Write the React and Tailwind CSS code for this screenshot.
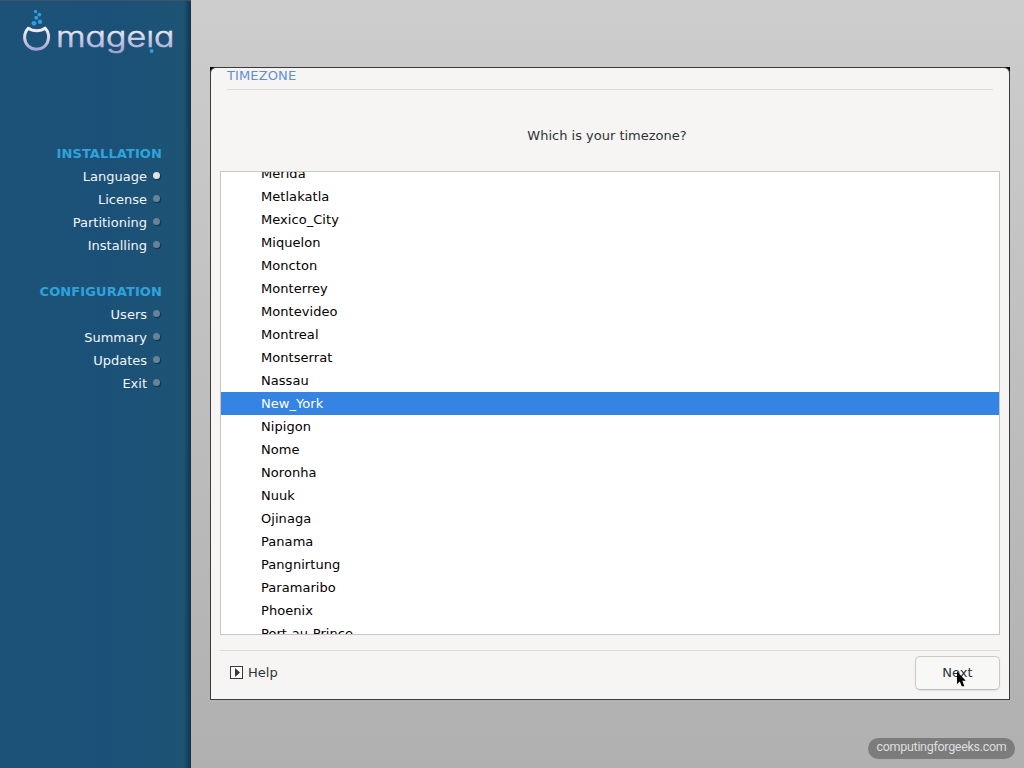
import React, { useState } from 'react';

const steps = [
  { title: 'INSTALLATION', items: ['Language', 'License', 'Partitioning', 'Installing'] },
  { title: 'CONFIGURATION', items: ['Users', 'Summary', 'Updates', 'Exit'] },
];

const zones = [
  'Merida', 'Metlakatla', 'Mexico_City', 'Miquelon', 'Moncton', 'Monterrey', 'Montevideo',
  'Montreal', 'Montserrat', 'Nassau', 'New_York', 'Nipigon', 'Nome', 'Noronha', 'Nuuk',
  'Ojinaga', 'Panama', 'Pangnirtung', 'Paramaribo', 'Phoenix', 'Port-au-Prince',
];

const Logo = () => (
  <svg width="191" height="64" viewBox="0 0 191 64" className="block" role="img" aria-label="mageia">
    <defs>
      <linearGradient id="silver" gradientUnits="userSpaceOnUse" x1="0" y1="27" x2="0" y2="54">
        <stop offset="0" stopColor="#f6f3f8" />
        <stop offset="0.45" stopColor="#d3cfe4" />
        <stop offset="1" stopColor="#8d92cb" />
      </linearGradient>
      <linearGradient id="word" gradientUnits="userSpaceOnUse" x1="0" y1="-18" x2="0" y2="8">
        <stop offset="0" stopColor="#f0edf4" />
        <stop offset="1" stopColor="#9a9dd0" />
      </linearGradient>
    </defs>
    <g fill="#2e9fdc">
      <circle cx="35.5" cy="11.5" r="1.7" />
      <circle cx="39.4" cy="14.6" r="1.9" />
      <circle cx="36.3" cy="17.8" r="2" />
      <circle cx="34" cy="23.3" r="2.4" />
      <circle cx="40" cy="21.8" r="2.2" />
      <circle cx="151.6" cy="51" r="2" />
    </g>
    <path
      d="M28.3 28.2C32.5 31.6 41 31.6 45.1 28.2C48 31.3 48.8 34.2 48.6 37.5C48.1 44.7 43.4 49.2 36.7 49.2C30 49.2 25.1 44.7 24.6 37.8C24.4 34.3 25.5 31.2 28.3 28.2Z"
      fill="none" stroke="url(#silver)" strokeWidth="3" strokeLinejoin="round"
    />
    <text
      x="0" y="0" transform="translate(56 46.6)" className="font-['Inter',sans-serif] font-light [font-feature-settings:'cv11']"
      fontSize="28.5" textLength="118.5" lengthAdjust="spacingAndGlyphs" fill="url(#word)" stroke="url(#word)" strokeWidth="0.6"
    >mageıa</text>
  </svg>
);

const Bullet = ({ active }) => (
  <span className={`w-[7px] h-[7px] rounded-full ml-[6px] mr-[2px] shadow-[1px_1px_1px_rgba(0,0,0,0.4)] ${active ? 'bg-[#e2e2e2]' : 'bg-[#688297]'}`} />
);

const Sidebar = () => (
  <aside className="w-[191px] h-full shrink-0 border-t border-[#3d5365] bg-[linear-gradient(90deg,transparent_184px,#123449_191px),linear-gradient(90deg,#1d5278,#1b5178_55%,#1d5374)]">
    <div className="h-[141px] -mt-px"><Logo /></div>
    <nav className="flex flex-col gap-[23px] pr-[29px] text-[13px]">
      {steps.map((group, g) => (
        <div key={group.title} className="flex flex-col items-end">
          <h2 className="h-[23px] leading-[25px] font-bold text-[#2fa3dc] tracking-[0.1px]">{group.title}</h2>
          {group.items.map((item, i) => (
            <div key={item} className="h-[23px] flex items-center text-[#f2f5f7]">
              <span className="leading-[23px] pt-px">{item}</span>
              <Bullet active={g === 0 && i === 0} />
            </div>
          ))}
        </div>
      ))}
    </nav>
  </aside>
);

const App = () => {
  const [zone, setZone] = useState('New_York');

  return (
    <div className="w-[1024px] h-[768px] flex overflow-hidden font-['DejaVu_Sans',sans-serif] text-[13px]">
      <Sidebar />
      <main className="flex-1 flex flex-col bg-linear-to-b from-[#cdcdcd] to-[#b0b0b0] pt-[67px] pl-[19px] pr-[14px]">
        <div className="h-[633px] bg-black">
          <section className="h-full flex flex-col border border-[#3b3b3b] rounded-t-[6px] bg-[#f6f5f3] px-[9px]">
            <h1 className="h-[22px] mx-[7px] leading-[16px] border-b border-[#dcdbd9] text-[#5f8ed8] tracking-[0.12px]">TIMEZONE</h1>
            <p className="h-[81px] pt-[36px] pr-[6px] leading-[20px] text-center text-[#2e3436]">Which is your timezone?</p>
            <ul className="h-[464px] overflow-hidden border border-[#c9c5c0] bg-white">
              {zones.map((name) => (
                <li
                  key={name}
                  onClick={() => setZone(name)}
                  className={`h-[23px] pl-10 leading-[24px] tracking-[0.05px] first:-mt-[10px] ${name === zone ? 'bg-[#3584e4] text-white' : 'text-black'}`}
                >
                  {name}
                </li>
              ))}
            </ul>
            <footer className="mt-[15px] border-t border-[#dcdbd9] pt-[5px] pl-[10px] flex items-center justify-between text-[#2e3436]">
              <button className="flex items-center gap-[5px]">
                <svg width="13" height="13" viewBox="0 0 13 13" className="-mt-px">
                  <rect x="0.5" y="0.5" width="12" height="12" fill="#fcfcfb" stroke="#35393b" />
                  <path d="M5 2L10 6.5L5 11Z" fill="#35393b" />
                </svg>
                Help
              </button>
              <button className="relative w-[85px] h-[34px] border border-[#cdc8c3] border-b-[#bfbab5] rounded-[5px] bg-[#f8f8f6] shadow-[0_1px_2px_rgba(0,0,0,0.07)]">
                Next
                <svg width="11" height="17" viewBox="0 0 11 17" className="absolute left-[40px] top-[14px]">
                  <path d="M1 0.5V13L3.8 10.4L5.8 15.2H8.3L6.3 9.8H9.8Z" fill="#000" />
                </svg>
              </button>
            </footer>
          </section>
        </div>
        <div className="mt-[38px] -mr-[5px] self-end w-[147px] h-[21px] rounded-full bg-[#7c7c7c] text-[#dedede] text-center text-[12.5px] leading-[18px] tracking-[-0.3px] font-[Roboto]">
          computingforgeeks.com
        </div>
      </main>
    </div>
  );
};
export default App;
